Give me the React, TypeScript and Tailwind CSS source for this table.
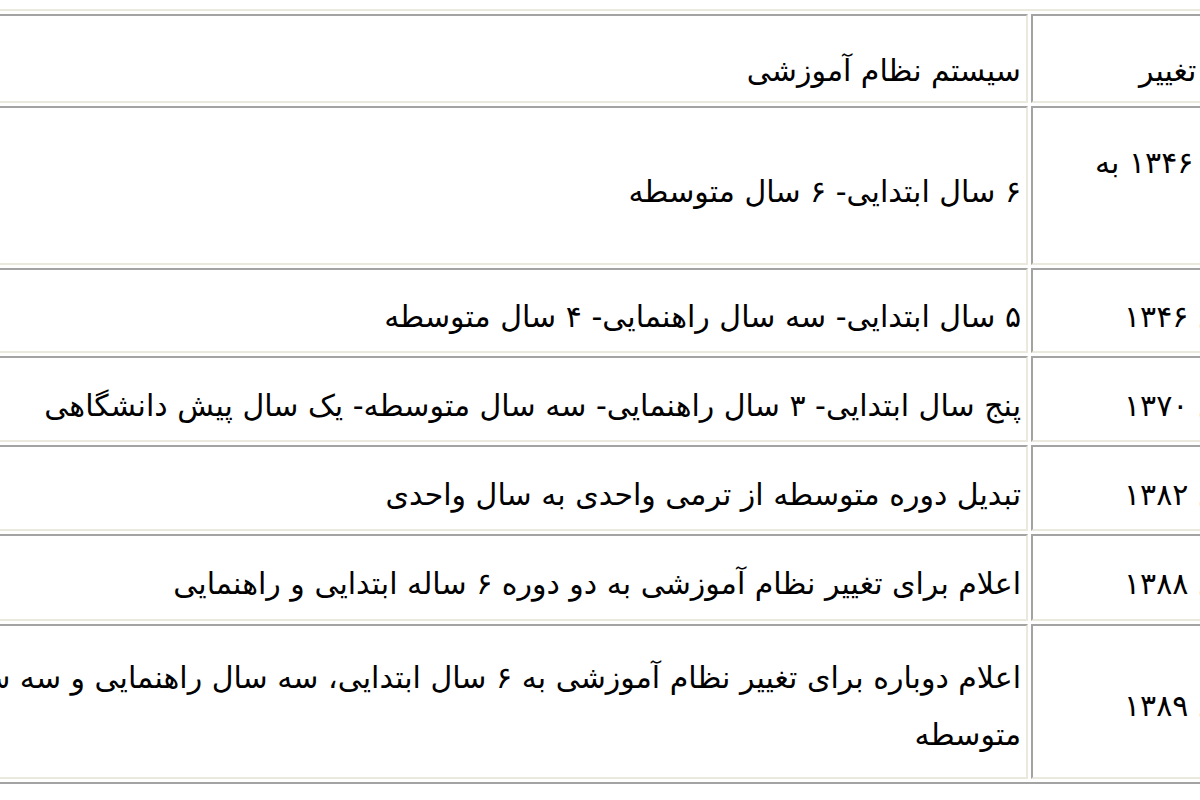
const rows = [
  { h: "h-[89px]", pad: "pt-[23px]", yr: "pr-[9px]", year: ["سال تغییر"], text: ["سیستم نظام آموزشی"] },
  { h: "h-[159px]", pad: "pt-[11px]", yr: "pr-[12px]", year: ["سال ۱۳۴۶ به", "قبل"], text: ["۶ سال ابتدایی- ۶ سال متوسطه"] },
  { h: "h-[85px]", pad: "pt-[12px]", yr: "pr-[17px]", year: ["سال ۱۳۴۶"], text: ["۵ سال ابتدایی- سه سال راهنمایی- ۴ سال متوسطه"] },
  { h: "h-[86px]", pad: "pt-[12px]", yr: "pr-[17px]", year: ["سال ۱۳۷۰"], text: ["پنج سال ابتدایی- ۳ سال راهنمایی- سه سال متوسطه- یک سال پیش دانشگاهی"] },
  { h: "h-[86px]", pad: "pt-[12px]", yr: "pr-[17px]", year: ["سال ۱۳۸۲"], text: ["تبدیل دوره متوسطه از ترمی واحدی به سال واحدی"] },
  { h: "h-[87px]", pad: "pt-[12px]", yr: "pr-[17px]", year: ["سال ۱۳۸۸"], text: ["اعلام برای تغییر نظام آموزشی به دو دوره ۶ ساله ابتدایی و راهنمایی"] },
  {
    h: "h-[155px]",
    pad: "pt-[8px]",
    yr: "pr-[17px]",
    year: ["سال ۱۳۸۹"],
    text: ["اعلام دوباره برای تغییر نظام آموزشی به ۶ سال ابتدایی، سه سال راهنمایی و سه سال", "متوسطه"],
  },
]

// inset cell border: dark top/left, light bottom/right
const cell =
  "flex items-center border-t-2 border-l-2 border-b-2 border-r-2 border-t-[#a3a3a3] border-l-[#a3a3a3] border-b-[#ebe9dd] border-r-[#ebe9dd]"

export default function App() {
  return (
    <div
      dir="rtl"
      className="w-[1200px] h-[800px] overflow-hidden bg-white text-black"
      style={{ fontFamily: '"DejaVu Sans", sans-serif' }}
    >
      <div className="w-[1800px] mt-[9px] -mr-[78px] border-t-2 border-l-2 border-b-2 border-r-2 border-t-[#ebe9dd] border-l-[#ebe9dd] border-b-[#a3a3a3] border-r-[#a3a3a3] p-[3px] flex flex-col gap-[3px]">
        {rows.map((r, i) => (
          <div key={i} className={`flex gap-[3px] ${r.h}`}>
            <div className={`${cell} ${r.pad} ${r.yr} w-[242px] shrink-0`}>
              <div className="text-[30px] leading-[57px] whitespace-nowrap">
                {r.year.map((l, j) => (
                  <div key={j}>{l}</div>
                ))}
              </div>
            </div>
            <div className={`${cell} ${r.pad} flex-1 pr-[5px]`}>
              <div className="text-[30px] leading-[57px] whitespace-nowrap">
                {r.text.map((l, j) => (
                  <div key={j}>{l}</div>
                ))}
              </div>
            </div>
          </div>
        ))}
      </div>
    </div>
  )
}
